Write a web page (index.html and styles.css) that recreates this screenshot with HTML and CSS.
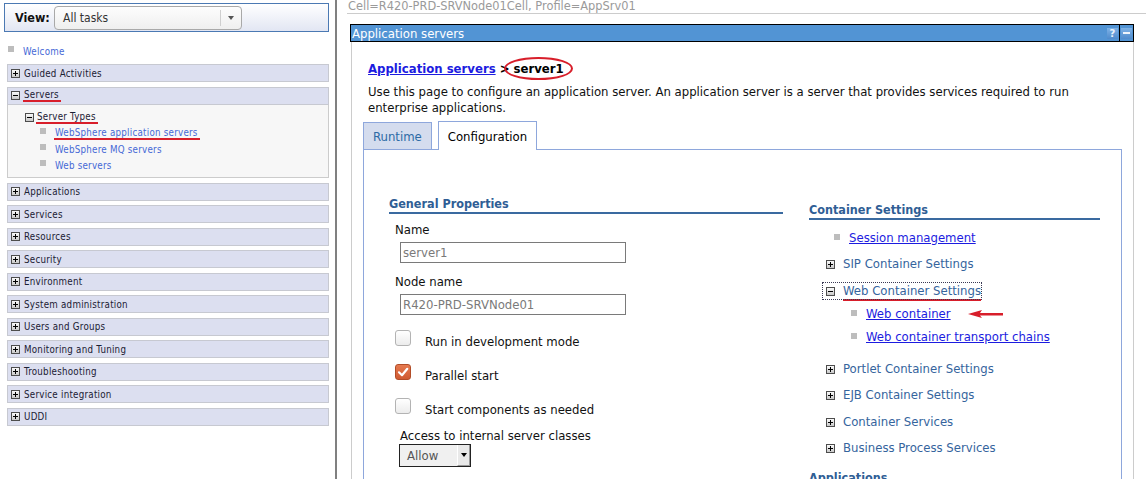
FILE: index.html
```html
<!DOCTYPE html>
<html lang="en">
<head>
<meta charset="utf-8">
<title>Application servers</title>
<link rel="stylesheet" href="styles.css">
</head>
<body>
<div class="page">
  <aside class="nav">
    <div class="viewbar">
      <span class="view-label">View:</span>
      <div class="view-select">
        <span class="vs-text">All tasks</span>
        <span class="vs-btn"><span class="tri"></span></span>
      </div>
    </div>
    <div class="welcome"><span class="sq"></span><a href="#">Welcome</a></div>
    <ul class="groups">
      <li class="group"><div class="ghead"><span class="pm plus"></span>Guided Activities</div></li>
      <li class="group">
        <div class="ghead"><span class="pm"></span><span class="mark">Servers</span></div>
        <div class="gbody">
          <div class="sub"><span class="pm"></span><span class="mark">Server Types</span></div>
          <div class="leaf"><span class="sq"></span><a href="#" class="mark">WebSphere application servers</a></div>
          <div class="leaf"><span class="sq"></span><a href="#">WebSphere MQ servers</a></div>
          <div class="leaf"><span class="sq"></span><a href="#">Web servers</a></div>
        </div>
      </li>
      <li class="group"><div class="ghead"><span class="pm plus"></span>Applications</div></li>
      <li class="group"><div class="ghead"><span class="pm plus"></span>Services</div></li>
      <li class="group"><div class="ghead"><span class="pm plus"></span>Resources</div></li>
      <li class="group"><div class="ghead"><span class="pm plus"></span>Security</div></li>
      <li class="group"><div class="ghead"><span class="pm plus"></span>Environment</div></li>
      <li class="group"><div class="ghead"><span class="pm plus"></span>System administration</div></li>
      <li class="group"><div class="ghead"><span class="pm plus"></span>Users and Groups</div></li>
      <li class="group"><div class="ghead"><span class="pm plus"></span>Monitoring and Tuning</div></li>
      <li class="group"><div class="ghead"><span class="pm plus"></span>Troubleshooting</div></li>
      <li class="group"><div class="ghead"><span class="pm plus"></span>Service integration</div></li>
      <li class="group"><div class="ghead"><span class="pm plus"></span>UDDI</div></li>
    </ul>
  </aside>

  <main class="main">
    <div class="cell">Cell=R420-PRD-SRVNode01Cell, Profile=AppSrv01</div>
    <section class="portlet">
      <header class="ptitle">
        <span class="ptitle-text">Application servers</span>
        <span class="pbtns">
          <span class="pbtn">?</span>
          <span class="pdiv"><span class="pbtn"><span class="dash"></span></span></span>
        </span>
      </header>
      <div class="pbody">
        <div class="crumb"><a href="#">Application servers</a> &gt; <span class="cur">server1</span></div>
        <p class="desc">Use this page to configure an application server. An application server is a server that provides services required to run<br>enterprise applications.</p>
        <div class="tabs">
          <span class="tab">Runtime</span>
          <span class="tab active">Configuration</span>
        </div>
        <div class="tabpanel">
          <div class="col-left">
            <div class="sec-head">General Properties</div>
            <div class="label first">Name</div>
            <div class="field">server1</div>
            <div class="label">Node name</div>
            <div class="field">R420-PRD-SRVNode01</div>
            <div class="check-row first"><span class="cb"></span><span class="cb-label">Run in development mode</span></div>
            <div class="check-row"><span class="cb checked"><svg viewBox="0 0 16 16" width="16" height="16"><path d="M4 8.3 L7 11.2 L12.3 4.8" fill="none" stroke="#fff" stroke-width="2.2" stroke-linecap="round" stroke-linejoin="round"/></svg></span><span class="cb-label">Parallel start</span></div>
            <div class="check-row"><span class="cb"></span><span class="cb-label">Start components as needed</span></div>
            <div class="label access">Access to internal server classes</div>
            <div class="select"><span class="sel-text">Allow</span><span class="sel-btn"><span class="tri dark"></span></span></div>
          </div>
          <div class="col-right">
            <div class="sec-head">Container Settings</div>
            <div class="item leaf-item first"><span class="sq"></span><a href="#">Session management</a></div>
            <div class="item exp-item"><span class="pm plus"></span><span>SIP Container Settings</span></div>
            <div class="item focus-wrap"><span class="focus"><span class="pm"></span><span class="mark">Web Container Settings</span></span></div>
            <div class="item sub-item near"><span class="sq"></span><a href="#">Web container</a>
              <svg class="arrow" width="36" height="10" viewBox="0 0 36 10"><path d="M0 5 L14 1 L12 4 L35 4 L35 6.4 L12 6.4 L14 9 Z" fill="#d81e2a"/></svg></div>
            <div class="item sub-item near2"><span class="sq"></span><a href="#">Web container transport chains</a></div>
            <div class="item exp-item gap"><span class="pm plus"></span><span>Portlet Container Settings</span></div>
            <div class="item exp-item"><span class="pm plus"></span><span>EJB Container Settings</span></div>
            <div class="item exp-item wide"><span class="pm plus"></span><span>Container Services</span></div>
            <div class="item exp-item"><span class="pm plus"></span><span>Business Process Services</span></div>
            <div class="sec-head apps">Applications</div>
          </div>
        </div>
      </div>
    </section>
  </main>
</div>
</body>
</html>
```

FILE: styles.css
```css
html, body {
  margin: 0;
  padding: 0;
  height: 479px;
  overflow: hidden;
  background: #fff;
}
body {
  font-family: "DejaVu Sans Condensed", "DejaVu Sans", sans-serif;
  font-stretch: semi-condensed;
  font-size: 13px;
  color: #000;
}
a { text-decoration: none; }

.page {
  display: flex;
  height: 479px;
}

/* ---------- left navigation ---------- */
.nav {
  width: 335px;
  flex: none;
  border-right: 2px solid #808080;
  padding-top: 3px;
  box-sizing: content-box;
  font-size: 9.7px;
  letter-spacing: 0.25px;
}
.viewbar {
  margin-left: 4px;
  width: 325px;
  height: 29px;
  box-sizing: border-box;
  border: 1px solid #4b79b3;
  background: linear-gradient(#ffffff, #e2e6f3);
  display: flex;
  align-items: center;
  padding-left: 10px;
  letter-spacing: 0;
}
.view-label {
  width: 39px;
  font-weight: bold;
  font-size: 12.5px;
  color: #111;
}
.view-select {
  width: 188px;
  height: 24px;
  box-sizing: border-box;
  border: 1px solid #a9a9a9;
  border-radius: 4px;
  background: linear-gradient(#fdfdfd, #efefef);
  display: flex;
  align-items: center;
}
.vs-text {
  flex: 1;
  padding-left: 8px;
  font-size: 12px;
  color: #333;
}
.vs-btn {
  width: 20px;
  height: 16px;
  border-left: 1px solid #cfcfcf;
  display: flex;
  align-items: center;
  justify-content: center;
}
.tri {
  width: 0;
  height: 0;
  border-left: 3px solid transparent;
  border-right: 3px solid transparent;
  border-top: 4px solid #555;
}
.tri.dark { border-top-color: #000; }

.sq {
  width: 6px;
  height: 6px;
  background: #bdbdbd;
  flex: none;
}
.welcome {
  margin: 12px 0 0 8px;
  height: 14px;
  display: flex;
  align-items: center;
  gap: 9px;
}
.welcome .sq { margin-top: -4px; }
.welcome a, .leaf a { color: #4568d6; }

.groups {
  list-style: none;
  margin: 6px 0 0 7px;
  padding: 0;
  width: 322px;
}
.group { margin-bottom: 4.5px; }
.ghead {
  height: 18px;
  box-sizing: border-box;
  border: 1px solid #c7c9d1;
  background: #dcdff0;
  display: flex;
  align-items: center;
  padding-left: 3px;
  gap: 4px;
  color: #1b2033;
}
.gbody {
  border: 1px solid #cccccc;
  border-top: none;
  background: #f7f7f7;
  padding: 5px 0 3.5px;
}
.sub {
  height: 16px;
  display: flex;
  align-items: center;
  padding-left: 17px;
  gap: 3px;
  color: #1b2033;
}
.leaf {
  height: 16px;
  display: flex;
  align-items: center;
  padding-left: 32px;
  gap: 9px;
}
.leaf .sq { margin-top: -5px; }

/* plus / minus boxes */
.pm {
  position: relative;
  flex: none;
  width: 9px;
  height: 9px;
  box-sizing: border-box;
  border: 1px solid #4d4d4d;
  background: linear-gradient(#fafafa, #c9c9c9);
}
.pm::before {
  content: "";
  position: absolute;
  left: 1px;
  right: 1px;
  top: 3px;
  height: 1px;
  background: #000;
}
.pm.plus::after {
  content: "";
  position: absolute;
  top: 1px;
  bottom: 1px;
  left: 3px;
  width: 1px;
  background: #000;
}

/* red annotation underline */
.mark {
  border-bottom: 2px solid #d81e2a;
  padding: 0 2px 0 1px;
  margin: 0 -2px 0 -1px;
}

/* ---------- main area ---------- */
.main {
  flex: 1;
  min-width: 0;
}
.cell {
  margin-left: 10px;
  padding-left: 1px;
  height: 13px;
  line-height: 13px;
  font-family: "DejaVu Sans", sans-serif;
  font-stretch: normal;
  font-size: 11.4px;
  color: #9a9a9a;
  border-bottom: 1px solid #cccccc;
}
.portlet {
  margin: 10px 12px 0 13px;
}
.ptitle {
  height: 18px;
  box-sizing: border-box;
  border: 1px solid #000;
  background: #5294d4;
  display: flex;
  align-items: center;
  justify-content: space-between;
  color: #fff;
  padding-left: 1px;
}
.ptitle-text { font-size: 13px; }
.pbtns {
  display: flex;
  align-items: center;
  align-self: stretch;
}
.pbtn {
  width: 11px;
  height: 11px;
  background: linear-gradient(#7fb2e6, #4f8bcc);
  color: #eaf2fb;
  font: bold 10px/11px "DejaVu Sans", sans-serif;
  text-align: center;
  display: flex;
  align-items: center;
  justify-content: center;
  margin-right: 1px;
}
.pdiv {
  align-self: stretch;
  display: flex;
  align-items: center;
  border-left: 1px solid #000;
  padding-left: 1px;
}
.dash {
  width: 7px;
  height: 2px;
  background: #eef4fb;
}

.pbody {
  margin-left: 1px;
  border-left: 1px solid #cccccc;
  border-right: 1px solid #cccccc;
  padding: 19px 0 0 11px;
  height: 460px;
}
.crumb {
  margin-left: 5px;
  line-height: 16px;
  font-weight: bold;
  font-size: 13px;
}
.crumb a {
  color: #1c1ce0;
  text-decoration: underline;
}
.cur {
  position: relative;
}
.cur::after {
  content: "";
  position: absolute;
  left: -10px;
  right: -9px;
  top: -4px;
  bottom: -4px;
  border: 2px solid #d81e2a;
  border-radius: 50%;
}
.desc {
  margin: 7px 0 0 5px;
  line-height: 16px;
  color: #111;
}

.tabs {
  margin-top: 5px;
  display: flex;
  align-items: flex-end;
  gap: 6px;
}
.tab {
  height: 27px;
  box-sizing: border-box;
  padding: 0 9px;
  border: 1px solid #8ea7dc;
  border-bottom: none;
  background: #d4dcee;
  color: #2c6aa5;
  display: flex;
  align-items: center;
}
.tab.active {
  height: 29px;
  margin-bottom: -1px;
  background: #fff;
  color: #000;
  position: relative;
  z-index: 1;
}
.tabpanel {
  margin-right: 11px;
  border: 1px solid #8ea7dc;
  padding: 46px 0 0 25px;
  height: 400px;
  display: flex;
  gap: 26px;
}
.col-left { width: 394px; }
.col-right { width: 291px; margin-top: 6px; }

.sec-head {
  font-weight: bold;
  font-size: 12.5px;
  line-height: 16px;
  color: #2f5e95;
  border-bottom: 2px solid #3a6aa0;
}
.sec-head.apps { margin-top: 14px; }

.label {
  margin: 11px 0 0 6px;
  line-height: 16px;
  color: #111;
}
.label.first { margin-top: 8px; }
.label.access { margin: 10px 0 0 11px; }
.field {
  margin: 4px 0 0 11px;
  width: 226px;
  height: 21px;
  box-sizing: border-box;
  border: 1px solid #7a7a7a;
  padding-left: 2px;
  line-height: 19px;
  color: #7a7a7a;
}
.check-row {
  margin: 14px 0 0 6px;
  display: flex;
  align-items: flex-start;
  gap: 14px;
}
.check-row.first { margin-top: 15px; }
.cb {
  width: 16px;
  height: 16px;
  flex: none;
  box-sizing: border-box;
  border: 1px solid #b3b3b3;
  border-radius: 3px;
  background: linear-gradient(#ffffff, #ececec);
  display: flex;
}
.cb svg { margin: -1px; }
.cb.checked {
  border-color: #b24d28;
  background: linear-gradient(#e67a50, #cf5a31);
}
.cb-label {
  margin-top: 4px;
  line-height: 16px;
  color: #111;
}
.select {
  margin: 0 0 0 10px;
  width: 72px;
  height: 23px;
  box-sizing: border-box;
  border: 1px solid #222;
  background: #f0f0f0;
  display: flex;
}
.sel-text {
  flex: 1;
  padding-left: 7px;
  line-height: 21px;
  color: #555;
}
.sel-btn {
  width: 13px;
  box-sizing: border-box;
  background: #e9e9e9;
  border-left: 1px solid #fff;
  border-right: 1px solid #999;
  border-bottom: 1px solid #999;
  display: flex;
  align-items: center;
  justify-content: center;
}

.item {
  display: flex;
  align-items: center;
  line-height: 16px;
  margin-top: 10px;
}
.item.first { margin-top: 10px; }
.leaf-item { padding-left: 25px; gap: 9px; }
.leaf-item .sq, .sub-item .sq { margin-top: -2px; }
.exp-item { padding-left: 17px; gap: 8px; color: #35649d; }
.exp-item.gap { margin-top: 16px; }
.exp-item.wide { margin-top: 11px; }
.item a { color: #1c1ce0; text-decoration: underline; }
.focus-wrap { margin-top: 11px; padding-left: 14px; }
.focus {
  display: inline-flex;
  align-items: center;
  gap: 8px;
  padding: 0 0 0 3px;
  outline: 1px dotted #3a3a55;
  color: #35649d;
}
.focus .mark { padding: 0; margin: 0 0 -2px; }
.sub-item { padding-left: 42px; gap: 9px; }
.sub-item.near { margin-top: 7px; }
.sub-item.near2 { margin-top: 7px; }
.arrow { margin-left: 8px; flex: none; }
```
